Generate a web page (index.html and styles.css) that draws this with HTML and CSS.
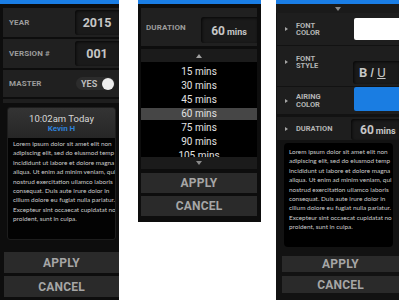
FILE: index.html
```html
<!DOCTYPE html>
<html>
<head>
<meta charset="utf-8">
<link rel="stylesheet" href="styles.css">
</head>
<body>
<div class="page">
  <!-- LEFT PANEL -->
  <div class="panel p-left">
    <svg class="topbar" width="119" height="4" viewBox="0 0 119 4"><rect width="119" height="4" fill="#1a7ee6"/></svg>
    <div class="rows">
      <div class="row"><span class="label">YEAR</span><span class="field">2015</span></div>
      <div class="row"><span class="label">VERSION #</span><span class="field">001</span></div>
      <div class="row row-short"><span class="label">MASTER</span><span class="toggle">YES<span class="knob"></span></span></div>
      <div class="row row-stub"></div>
    </div>
    <div class="card">
      <div class="card-head">
        <div class="time">10:02am Today</div>
        <div class="who">Kevin H</div>
      </div>
      <div class="lorem">Lorem ipsum dolor sit amet elit non<br>adipiscing elit, sed do eiusmod temp<br>incididunt ut labore et dolore magna<br>aliqua. Ut enim ad minim veniam, qui<br>nostrud exercitation ullamco laboris<br>consequat. Duis aute irure dolor in<br>cillum dolore eu fugiat nulla pariatur.<br>Excepteur sint occaecat cupidatat no<br>proident, sunt in culpa.</div>
    </div>
    <div class="buttons b-left">
      <div class="btn">APPLY</div>
      <div class="btn">CANCEL</div>
    </div>
  </div>

  <!-- MIDDLE PANEL -->
  <div class="panel p-mid">
    <svg class="topbar" width="123" height="4" viewBox="0 0 123 4"><rect width="123" height="4" fill="#1a7ee6"/></svg>
    <div class="mid-inner">
      <div class="row dur-row">
        <span class="label">DURATION</span>
        <span class="field field-mins">60 <small>mins</small></span>
      </div>
      <div class="arrowbar up"><span class="tri-up"></span></div>
      <div class="list">
        <div class="item">15 mins</div>
        <div class="item">30 mins</div>
        <div class="item">45 mins</div>
        <div class="item sel">60 mins</div>
        <div class="item">75 mins</div>
        <div class="item">90 mins</div>
        <div class="item">105 mins</div>
      </div>
      <div class="arrowbar down"><span class="tri-down"></span></div>
      <div class="buttons b-mid">
        <div class="btn">APPLY</div>
        <div class="btn">CANCEL</div>
      </div>
    </div>
  </div>

  <!-- RIGHT PANEL -->
  <div class="panel p-right">
    <svg class="topbar" width="123" height="4" viewBox="0 0 123 4"><rect width="123" height="4" fill="#1a7ee6"/></svg>
    <div class="arrowbar rtop"><span class="tri-down"></span></div>
    <div class="rrows">
      <div class="rrow r1">
        <span class="rlabel"><span class="tri-right"></span><span>FONT<br>COLOR</span></span>
        <span class="swatch white"></span>
      </div>
      <div class="rrow r2">
        <span class="rlabel"><span class="tri-right"></span><span>FONT<br>STYLE</span></span>
        <span class="field biu"><b>B</b><i>I</i><u>U</u></span>
      </div>
      <div class="rrow r3">
        <span class="rlabel"><span class="tri-right"></span><span>AIRING<br>COLOR</span></span>
        <span class="swatch blue"></span>
      </div>
      <div class="rrow r4">
        <span class="rlabel"><span class="tri-right"></span><span>DURATION</span></span>
        <span class="field field-mins r-mins">60 <small>mins</small></span>
      </div>
    </div>
    <div class="rcard">
      <div class="lorem">Lorem ipsum dolor sit amet elit non<br>adipiscing elit, sed do eiusmod temp<br>incididunt ut labore et dolore magna<br>aliqua. Ut enim ad minim veniam, qui<br>nostrud exercitation ullamco laboris<br>consequat. Duis aute irure dolor in<br>cillum dolore eu fugiat nulla pariatur.<br>Excepteur sint occaecat cupidatat no<br>proident, sunt in culpa.</div>
    </div>
    <div class="buttons b-right">
      <div class="btn">APPLY</div>
      <div class="btn">CANCEL</div>
    </div>
  </div>
</div>
</body>
</html>
```

FILE: styles.css
```css
html, body {
  margin: 0;
  padding: 0;
  background: #ffffff;
  font-family: Roboto, "Liberation Sans", sans-serif;
}
.page {
  display: flex;
  align-items: flex-start;
  gap: 19px;
  width: 400px;
  height: 300px;
  overflow: hidden;
}
.panel {
  background: #0d0d0d;
  display: flex;
  flex-direction: column;
  flex: none;
}
.topbar {
  display: block;
  flex: none;
}

/* ---------- LEFT ---------- */
.p-left {
  width: 119px;
  height: 300px;
}
.rows {
  display: flex;
  flex-direction: column;
  gap: 2px;
  padding: 4px 0 0 3px;
}
.row {
  height: 29px;
  background: #202020;
  display: flex;
  align-items: center;
  justify-content: space-between;
}
.row-short { height: 27px; }
.row-stub { height: 4px; background: #1e1e1e; }
.label {
  font-weight: 700;
  font-size: 8px;
  color: #9c9c9c;
  padding-left: 6px;
  letter-spacing: 0.1px;
}
.field {
  width: 44px;
  height: 25px;
  background: #1a1a1a;
  border-radius: 3px 0 0 3px;
  box-shadow: inset 1px 1px 3px rgba(0,0,0,0.75);
  display: flex;
  align-items: center;
  justify-content: center;
  color: #c6c6c6;
  font-weight: 700;
  font-size: 12.5px;
}
.toggle {
  width: 39px;
  height: 13px;
  margin-right: 4px;
  border-radius: 7px;
  background: #2c2c2c;
  display: flex;
  align-items: center;
  justify-content: space-between;
  padding-left: 5px;
  box-sizing: border-box;
  color: #bdbdbd;
  font-weight: 700;
  font-size: 9px;
}
.knob {
  width: 12px;
  height: 12px;
  border-radius: 50%;
  background: #eeeeee;
  margin-right: 1px;
}
.card {
  margin: 4px 3px 0 7px;
  height: 133px;
  background: #030303;
  border: 1px solid #1d1d1d;
  border-radius: 3px;
  box-sizing: border-box;
  overflow: hidden;
  display: flex;
  flex-direction: column;
}
.card-head {
  height: 30px;
  flex: none;
  background: linear-gradient(#343434, #262626);
  display: flex;
  flex-direction: column;
  align-items: center;
  justify-content: center;
}
.time {
  color: #d8d8d8;
  font-size: 9.5px;
  line-height: 11px;
}
.who {
  color: #2f80d8;
  font-size: 8px;
  font-weight: 700;
  line-height: 9px;
}
.lorem {
  font-family: Lato, "DejaVu Sans", sans-serif;
  font-size: 6.4px;
  line-height: 9.4px;
  color: #cccccc;
  white-space: nowrap;
  padding: 1px 0 0 5px;
}
.buttons {
  display: flex;
  flex-direction: column;
  gap: 3px;
}
.btn {
  height: 21px;
  background: #2a2a2a;
  display: flex;
  align-items: center;
  justify-content: center;
  color: #a6a6a6;
  font-weight: 700;
  font-size: 12px;
  letter-spacing: 0.2px;
}
.b-left {
  margin: 12px 0 0 4px;
}

/* ---------- MIDDLE ---------- */
.p-mid {
  width: 123px;
  height: 222px;
}
.mid-inner {
  padding: 0 4px 0 3px;
  display: flex;
  flex-direction: column;
}
.dur-row {
  margin-top: 4px;
  height: 38px;
  align-items: flex-end;
  padding-bottom: 3px;
  box-sizing: border-box;
}
.dur-row .label {
  align-self: center;
  padding-left: 5px;
  padding-top: 3px;
}
.field-mins {
  width: 56px;
  height: 26px;
  gap: 2px;
  align-items: baseline;
  padding-top: 7px;
  box-sizing: border-box;
  font-size: 12px;
}
.field-mins small {
  font-size: 9px;
  font-weight: 700;
}
.arrowbar {
  background: #1b1b1b;
  display: flex;
  align-items: center;
  justify-content: center;
}
.arrowbar.up { height: 13px; margin-top: 3px; }
.arrowbar.down { height: 12px; }
.tri-up {
  width: 0; height: 0;
  border-left: 3.5px solid transparent;
  border-right: 3.5px solid transparent;
  border-bottom: 4px solid #a0a0a0;
}
.tri-down {
  width: 0; height: 0;
  border-left: 3.5px solid transparent;
  border-right: 3.5px solid transparent;
  border-top: 4px solid #8a8a8a;
}
.list {
  height: 95px;
  overflow: hidden;
  background: #000;
  padding-top: 4px;
  box-sizing: border-box;
  display: flex;
  flex-direction: column;
  gap: 2px;
}
.item {
  flex: none;
  height: 12px;
  line-height: 12px;
  text-align: center;
  color: #e2e2e2;
  font-size: 10px;
}
.item.sel { background: #464646; }
.b-mid { margin-top: 4px; }
.b-mid .btn { height: 20px; }

/* ---------- RIGHT ---------- */
.p-right {
  width: 123px;
  height: 300px;
  margin-left: -4px;
  background: #121212;
}
.arrowbar.rtop { height: 9px; background: #1a1a1a; }
.rrows {
  display: flex;
  flex-direction: column;
  gap: 1px;
  padding-left: 1px;
}
.rrow {
  background: #1e1e1e;
  display: flex;
  align-items: center;
  justify-content: space-between;
}
.r1 { height: 32px; }
.r2 { height: 40px; align-items: flex-end; padding-bottom: 2px; box-sizing: border-box; }
.r3 { height: 27px; align-items: flex-start; }
.r4 { height: 23px; align-items: flex-end; margin-top: 2px; }
.rlabel {
  display: flex;
  align-items: center;
  gap: 8px;
  padding-left: 8px;
  font-weight: 700;
  font-size: 7.5px;
  line-height: 7.5px;
  color: #b4b4b4;
}
.r2 .rlabel { align-self: center; padding-top: 0; margin-top: -6px; }
.r3 .rlabel { align-self: center; }
.r4 .rlabel { align-self: center; }
.tri-right {
  width: 0; height: 0;
  border-top: 2.5px solid transparent;
  border-bottom: 2.5px solid transparent;
  border-left: 3.5px solid #a5a5a5;
}
.swatch {
  width: 45px;
  height: 22px;
  border-radius: 2px 0 0 2px;
}
.swatch.white { background: #ffffff; }
.swatch.blue { background: #1a7de2; height: 24px; }
.biu {
  width: 46px;
  height: 23px;
  gap: 3px;
  font-size: 13px;
  justify-content: flex-start;
  padding-left: 6px;
  box-sizing: border-box;
  font-weight: 400;
}
.biu b { font-weight: 700; }
.biu i { font-family: "DejaVu Sans", sans-serif; font-weight: 300; }
.r-mins {
  width: 48px;
  height: 21px;
  padding-top: 4px;
  justify-content: flex-start;
  padding-left: 9px;
}
.rcard {
  margin: 3px 6px 0 8px;
  height: 104px;
  background: #000;
  border-radius: 4px;
  padding-top: 3px;
  box-sizing: border-box;
  overflow: hidden;
}
.rcard .lorem { padding-left: 5px; }
.b-right { margin: 9px 0 0 6px; gap: 4px; }
.b-right .btn { height: 16px; }
.b-right .btn + .btn { height: 17px; }
```
